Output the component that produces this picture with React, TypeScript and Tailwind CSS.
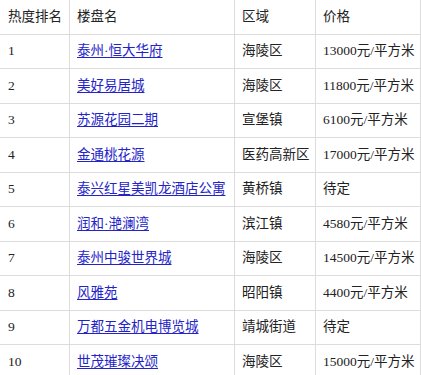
import React from 'react';

const rows = [
  { rank: '1', name: '泰州·恒大华府', area: '海陵区', price: '13000元/平方米' },
  { rank: '2', name: '美好易居城', area: '海陵区', price: '11800元/平方米' },
  { rank: '3', name: '苏源花园二期', area: '宣堡镇', price: '6100元/平方米' },
  { rank: '4', name: '金通桃花源', area: '医药高新区', price: '17000元/平方米' },
  { rank: '5', name: '泰兴红星美凯龙酒店公寓', area: '黄桥镇', price: '待定' },
  { rank: '6', name: '润和·滟澜湾', area: '滨江镇', price: '4580元/平方米' },
  { rank: '7', name: '泰州中骏世界城', area: '海陵区', price: '14500元/平方米' },
  { rank: '8', name: '风雅苑', area: '昭阳镇', price: '4400元/平方米' },
  { rank: '9', name: '万都五金机电博览城', area: '靖城街道', price: '待定' },
  { rank: '10', name: '世茂璀璨决颂', area: '海陵区', price: '15000元/平方米' },
];

const cell = 'h-[34.5px] flex items-center border-b border-[#dcdcdc] px-[7px] whitespace-nowrap';

export default function App() {
  return (
    <div
      className="w-[421px] bg-white text-[13.5px] text-[#222]"
      style={{ fontFamily: '"Liberation Serif", "Noto Sans CJK SC", serif' }}
    >
      <div className="grid grid-cols-[69px_165px_81px_106px]">
        <div className={`${cell} pl-[8px]`}>热度排名</div>
        <div className={`${cell} border-l`}>楼盘名</div>
        <div className={`${cell} border-l`}>区域</div>
        <div className={`${cell} border-l border-r`}>价格</div>
        {rows.map((r) => (
          <React.Fragment key={r.rank}>
            <div className={`${cell} pl-[8px]`}>{r.rank}</div>
            <div className={`${cell} border-l`}>
              <a href="#" className="text-[#2323c8] underline underline-offset-2">{r.name}</a>
            </div>
            <div className={`${cell} border-l`}>{r.area}</div>
            <div className={`${cell} border-l border-r`}>{r.price}</div>
          </React.Fragment>
        ))}
      </div>
    </div>
  );
}
